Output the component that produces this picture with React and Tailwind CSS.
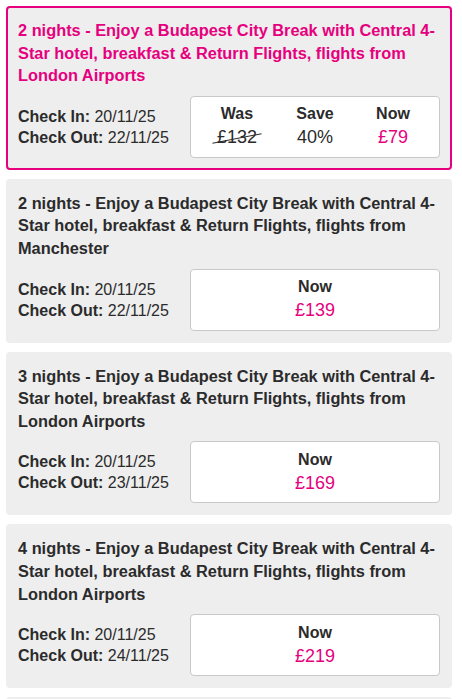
import React from 'react'

const deals = [
  {
    nights: 2,
    from: 'London Airports',
    checkIn: '20/11/25',
    checkOut: '22/11/25',
    was: '£132',
    save: '40%',
    now: '£79',
    selected: true,
  },
  { nights: 2, from: 'Manchester', checkIn: '20/11/25', checkOut: '22/11/25', now: '£139' },
  { nights: 3, from: 'London Airports', checkIn: '20/11/25', checkOut: '23/11/25', now: '£169' },
  { nights: 4, from: 'London Airports', checkIn: '20/11/25', checkOut: '24/11/25', now: '£219' },
  { nights: 5, from: 'London Airports', checkIn: '20/11/25', checkOut: '25/11/25', now: '£259' },
]

function PriceBox({ deal }) {
  if (!deal.was) {
    return (
      <div className="w-[250px] h-[62px] shrink-0 bg-white border border-[#c8c8c8] rounded-[4px] flex flex-col items-center justify-center">
        <div className="text-[16px] leading-[22px] font-bold">Now</div>
        <div className="text-[18px] leading-[25px] text-[#e6007e]">{deal.now}</div>
      </div>
    )
  }
  return (
    <div className="w-[250px] h-[62px] shrink-0 bg-white border border-[#c8c8c8] rounded-[4px] px-[7px] grid grid-cols-3 content-center">
      <div className="flex flex-col items-center">
        <div className="text-[16px] leading-[22px] font-bold">Was</div>
        <div className="relative text-[18px] leading-[25px]">
          {deal.was}
          <span className="absolute left-[-5px] right-[-5px] top-1/2 h-px bg-[#2b2b2b] -rotate-[11deg]"></span>
        </div>
      </div>
      <div className="flex flex-col items-center">
        <div className="text-[16px] leading-[22px] font-bold">Save</div>
        <div className="text-[18px] leading-[25px]">{deal.save}</div>
      </div>
      <div className="flex flex-col items-center">
        <div className="text-[16px] leading-[22px] font-bold">Now</div>
        <div className="text-[18px] leading-[25px] text-[#e6007e]">{deal.now}</div>
      </div>
    </div>
  )
}

function DealCard({ deal }) {
  return (
    <div
      className={`rounded-[4px] border-2 bg-[#eeeeee] px-[10px] pt-[11px] pb-[10px] ${
        deal.selected ? 'border-[#e6007e]' : 'border-transparent'
      }`}
    >
      <h2
        className={`text-[16.35px] leading-[22.6px] font-bold ${
          deal.selected ? 'text-[#e6007e]' : 'text-[#2b2b2b]'
        }`}
      >
        {deal.nights} nights - Enjoy a Budapest City Break with Central 4-Star hotel, breakfast &amp; Return
        Flights, flights from {deal.from}
      </h2>
      <div className="mt-[9px] flex items-center">
        <div className="flex-1 text-[16px] leading-[21px]">
          <div>
            <span className="font-bold">Check In:</span> {deal.checkIn}
          </div>
          <div>
            <span className="font-bold">Check Out:</span> {deal.checkOut}
          </div>
        </div>
        <PriceBox deal={deal} />
      </div>
    </div>
  )
}

export default function App() {
  return (
    <div
      className="min-h-screen bg-white text-[#2b2b2b] pl-[6px] pr-[10px] pt-[6px] pb-[6px] flex flex-col gap-[9px]"
      style={{ fontFamily: '"Liberation Sans", Arial, sans-serif' }}
    >
      {deals.map((d, i) => (
        <DealCard key={i} deal={d} />
      ))}
    </div>
  )
}
